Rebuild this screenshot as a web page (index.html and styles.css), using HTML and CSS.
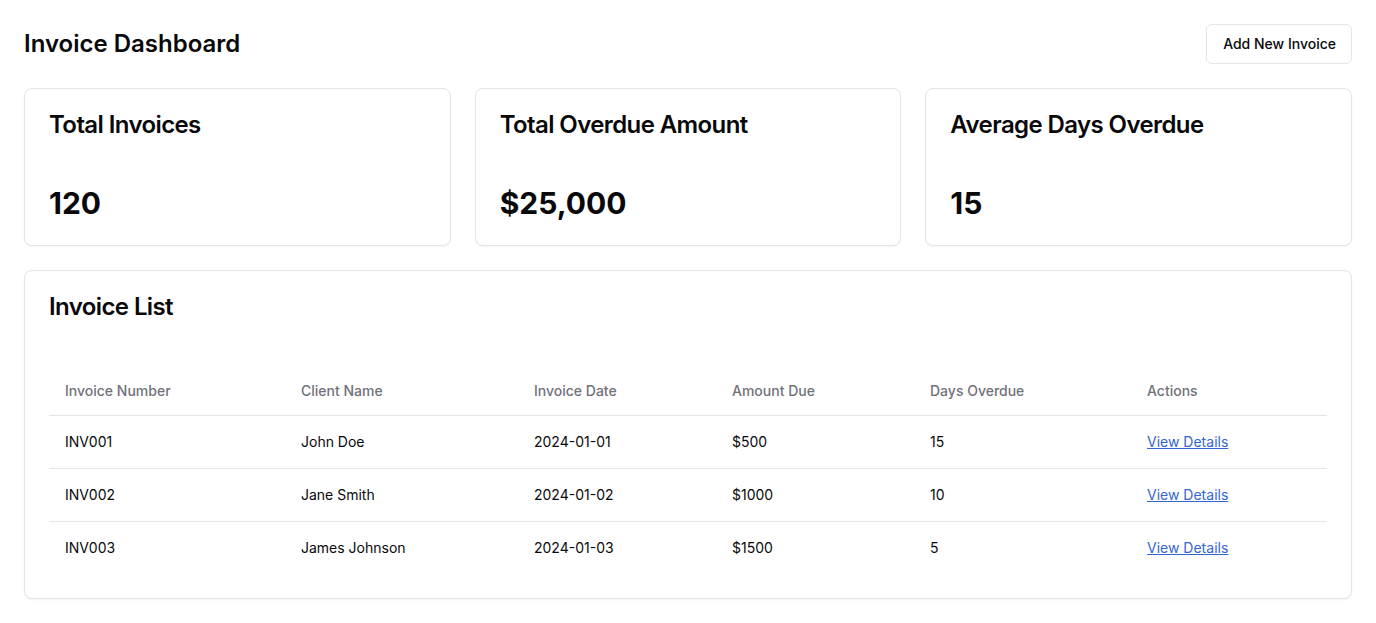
FILE: index.html
```html
<!DOCTYPE html>
<html lang="en">
<head>
<meta charset="utf-8">
<title>Invoice Dashboard</title>
<link rel="stylesheet" href="styles.css">
</head>
<body>
<div class="page">
  <header class="topbar">
    <h1 class="page-title">Invoice Dashboard</h1>
    <button class="btn">Add New Invoice</button>
  </header>
  <section class="stats">
    <div class="card stat-card">
      <h2 class="card-title">Total Invoices</h2>
      <div class="stat-value">120</div>
    </div>
    <div class="card stat-card">
      <h2 class="card-title">Total Overdue Amount</h2>
      <div class="stat-value">$25,000</div>
    </div>
    <div class="card stat-card">
      <h2 class="card-title">Average Days Overdue</h2>
      <div class="stat-value">15</div>
    </div>
  </section>
  <section class="card list-card">
    <h2 class="card-title">Invoice List</h2>
    <table class="table">
      <colgroup>
        <col class="c1"><col class="c2"><col class="c3"><col class="c4"><col class="c5"><col class="c6">
      </colgroup>
      <thead>
        <tr>
          <th>Invoice Number</th>
          <th>Client Name</th>
          <th>Invoice Date</th>
          <th>Amount Due</th>
          <th>Days Overdue</th>
          <th>Actions</th>
        </tr>
      </thead>
      <tbody>
        <tr>
          <td>INV001</td><td>John Doe</td><td>2024-01-01</td><td>$500</td><td>15</td><td><a href="#" class="link">View Details</a></td>
        </tr>
        <tr>
          <td>INV002</td><td>Jane Smith</td><td>2024-01-02</td><td>$1000</td><td>10</td><td><a href="#" class="link">View Details</a></td>
        </tr>
        <tr>
          <td>INV003</td><td>James Johnson</td><td>2024-01-03</td><td>$1500</td><td>5</td><td><a href="#" class="link">View Details</a></td>
        </tr>
      </tbody>
    </table>
  </section>
</div>
</body>
</html>
```
FILE: styles.css
```css
* { box-sizing: border-box; }
html, body { margin: 0; padding: 0; background: #ffffff; }
body {
  font-family: Inter, "Noto Sans", sans-serif;
  color: #09090b;
  -webkit-font-smoothing: antialiased;
}
.page {
  padding: 24px;
  display: flex;
  flex-direction: column;
  gap: 24px;
}
.topbar {
  display: flex;
  justify-content: space-between;
  align-items: center;
  height: 40px;
}
.page-title {
  margin: 0;
  font-size: 24px;
  line-height: 32px;
  font-weight: 600;
}
.btn {
  height: 40px;
  padding: 0 15px 1px 16px;
  border: 1px solid #e4e4e7;
  border-radius: 6px;
  background: #ffffff;
  font-family: inherit;
  font-size: 14px;
  line-height: 20px;
  font-weight: 500;
  color: #09090b;
}
.stats {
  display: grid;
  grid-template-columns: repeat(3, 1fr);
  gap: 24px;
}
.card {
  border: 1px solid #e4e4e7;
  border-radius: 8px;
  background: #ffffff;
  box-shadow: 0 1px 2px rgba(0,0,0,0.05);
  padding: 24px;
}
.card-title {
  margin: 0;
  font-size: 24px;
  line-height: 24px;
  font-weight: 600;
  letter-spacing: -0.025em;
}
.stat-card {
  display: flex;
  flex-direction: column;
  height: 158px;
}
.stat-value {
  margin-top: auto;
  font-size: 30px;
  line-height: 36px;
  font-weight: 700;
}
.list-card {
  display: flex;
  flex-direction: column;
  gap: 48px;
}
.table {
  width: 100%;
  border-collapse: collapse;
  font-size: 14px;
  table-layout: fixed;
}
.c1 { width: 236px; }
.c2 { width: 233px; }
.c3 { width: 198px; }
.c4 { width: 198px; }
.c5 { width: 217px; }
.c6 { width: 196px; }
.table th {
  height: 48px;
  padding: 0 16px;
  text-align: left;
  font-weight: 500;
  color: #71717a;
  border-bottom: 1px solid #e4e4e7;
}
.table td {
  padding: 16px;
  line-height: 20px;
  border-bottom: 1px solid #e4e4e7;
}
.table tbody tr:last-child td { border-bottom: 0; }
.link {
  color: #3366d1;
  text-decoration: underline;
}
```
